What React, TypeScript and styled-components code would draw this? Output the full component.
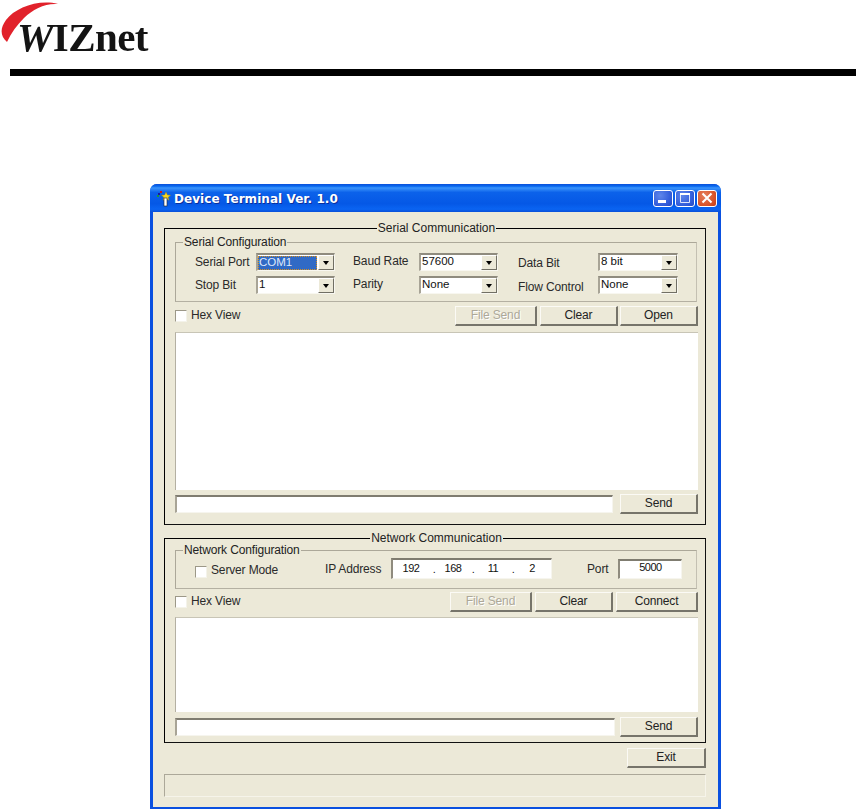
import React from "react";
import styled, { createGlobalStyle } from "styled-components";

const Global = createGlobalStyle`
  html, body { margin: 0; padding: 0; background: #fff; }
  * { box-sizing: border-box; }
  #root { width: 856px; height: 810px; overflow: hidden; font-family: "Liberation Sans", Arial, sans-serif; font-size: 12px; letter-spacing: -0.15px; color: #222; }
`;

const Header = styled.header`
  position: relative;
  height: 69px;
  padding: 15px 0 0 17px;
`;
const LogoText = styled.div`
  position: relative;
  font-family: "Liberation Serif", "Times New Roman", serif;
  font-weight: 700;
  font-size: 41px;
  line-height: 44px;
  letter-spacing: -0.6px;
  color: #141414;
  filter: blur(0.35px);
`;
const LogoW = styled.span`
  font-style: italic;
`;
const Swoosh = styled.svg`
  position: absolute;
  left: 0;
  top: 0;
`;
const Rule = styled.div`
  height: 7px;
  margin-left: 10px;
  background: #000;
`;
const Page = styled.main`
  padding: 108px 0 0 150px;
`;
const Win = styled.div`
  width: 571px;
  background: #0a50e0;
  border-radius: 7px 7px 0 0;
  display: flex;
  flex-direction: column;
  padding: 0 3px 2px;
`;
const TitleBar = styled.div`
  height: 28px;
  margin: 0 -3px;
  padding: 0 4px 0 5px;
  border-radius: 7px 7px 0 0;
  background: linear-gradient(180deg, #0a4fd8 0%, #0a6af0 8%, #3b94fb 14%, #0c62ea 30%, #0558e6 70%, #0a64f2 90%, #0a50d8 100%);
  display: flex;
  align-items: center;
  gap: 2px;
`;
const TitleText = styled.div`
  flex: 1;
  margin: 2px 0 0 -1px;
  color: #fff;
  font-family: "DejaVu Sans", Verdana, sans-serif;
  font-weight: 700;
  font-size: 12px;
  letter-spacing: 0.05px;
  text-shadow: 1px 1px 0 #0a2f9c;
  white-space: nowrap;
`;
const Caption = styled.button<{ $red?: boolean }>`
  width: 20px;
  height: 17px;
  padding: 0;
  border: 1px solid #fff;
  border-radius: 3px;
  background: ${(p) =>
    p.$red
      ? "radial-gradient(circle at 35% 30%, #e5805e, #d9562c 60%, #c63c18)"
      : "radial-gradient(circle at 35% 30%, #5f86ea, #3560dc 60%, #2448c4)"};
  display: flex;
  align-items: center;
  justify-content: center;
`;
const Body = styled.div`
  background: #ece9d8;
  padding: 9px 12px 10px 11px;
`;
const Group = styled.fieldset<{ $gap?: number }>`
  margin: ${(p) => p.$gap ?? 0}px 0 0;
  padding: 0 7px 0 10px;
  min-width: 0;
  border: 1px solid #000;
  border-right-color: #111;
  border-bottom-color: #111;
`;
const GroupLegend = styled.legend`
  margin: 0 auto;
  padding: 0 1px;
  height: 14px;
  line-height: 14px;
  letter-spacing: 0;
  color: #222;
`;
const Inner = styled.fieldset<{ $top?: number }>`
  margin: ${(p) => p.$top ?? 0}px 1px 0 0;
  padding: 0;
  min-width: 0;
  border: 1px solid #aca899;
  border-right-color: #c4c0b2;
  border-bottom-color: #b4b0a2;
`;
const InnerLegend = styled.legend`
  margin-left: 7px;
  padding: 0 1px;
  height: 14px;
  line-height: 14px;
  color: #222;
`;
const ConfigGrid = styled.div`
  display: grid;
  grid-template-columns: 61px 79px 84px 79px 100px 80px;
  grid-auto-rows: 18px;
  row-gap: 5px;
  padding: 4px 0 7px 19px;
  align-items: center;
`;
const Label = styled.span<{ $indent?: number; $dy?: number }>`
  padding-left: ${(p) => p.$indent ?? 0}px;
  margin-top: ${(p) => p.$dy ?? 0}px;
  white-space: nowrap;
  color: #2a2a2a;
`;
const ComboBox = styled.div`
  height: 18px;
  display: flex;
  background: #fff;
  border-style: solid;
  border-width: 2px 1px 1px 2px;
  border-color: #8f8b7e #f8f7f0 #f8f7f0 #a8a496;
`;
const ComboValue = styled.div<{ $selected?: boolean }>`
  flex: 1;
  margin: ${(p) => (p.$selected ? "1px 1px 0 0" : "0")};
  padding-left: 1px;
  font-size: 11.5px;
  letter-spacing: 0;
  line-height: ${(p) => (p.$selected ? "12px" : "13px")};
  white-space: nowrap;
  color: ${(p) => (p.$selected ? "#dfe8fb" : "#111")};
  background: ${(p) => (p.$selected ? "#316ac5" : "#fff")};
  outline: ${(p) => (p.$selected ? "1px dotted #d89020" : "none")};
  outline-offset: -1px;
`;
const ComboArrow = styled.div`
  width: 16px;
  background: #ece9d8;
  border-style: solid;
  border-width: 1px;
  border-color: #fff #716f64 #716f64 #fff;
  display: flex;
  align-items: center;
  justify-content: center;
  &::before {
    content: "";
    border-style: solid;
    border-width: 4px 3.5px 0;
    border-color: #000 transparent transparent;
  }
`;
const Row = styled.div<{ $gap?: number; $top?: number }>`
  display: flex;
  align-items: center;
  height: 20px;
  gap: ${(p) => p.$gap ?? 3}px;
  margin-top: ${(p) => p.$top ?? 4}px;
`;
const Box = styled.span<{ $low?: boolean }>`
  width: 12px;
  height: 12px;
  flex: none;
  margin-top: ${(p) => (p.$low ? 2 : 0)}px;
  background: #fff;
  border-style: solid;
  border-width: 1px;
  border-color: #9c9888 #f4f3ea #f4f3ea #9c9888;
`;
const CheckLabel = styled.label<{ $dy?: number }>`
  display: flex;
  align-items: center;
  gap: 4px;
  margin-top: ${(p) => p.$dy ?? 0}px;
  margin-right: auto;
  white-space: nowrap;
  color: #2a2a2a;
`;
const CheckText = styled.span`
  margin-bottom: 2px;
`;
const WinButton = styled.button<{ $w: number; $ml?: number }>`
  width: ${(p) => p.$w}px;
  height: 20px;
  padding: 0 0 2px;
  margin-left: ${(p) => p.$ml ?? 0}px;
  font: inherit;
  letter-spacing: inherit;
  color: ${(p) => (p.disabled ? "#aca899" : "#222")};
  background: #ece9d8;
  border-style: solid;
  border-width: 1px 2px 2px 1px;
  border-color: #fbfaf5 #76746a #76746a #fbfaf5;
  text-shadow: ${(p) => (p.disabled ? "1px 1px 0 #fff" : "none")};
`;
const TextPane = styled.div<{ $h: number; $top: number }>`
  height: ${(p) => p.$h}px;
  margin-top: ${(p) => p.$top}px;
  background: #fff;
  border-left: 1px solid #b4b0a2;
  border-top: 1px solid #c8c5b6;
`;
const TextInput = styled.div<{ $w: number }>`
  width: ${(p) => p.$w}px;
  height: 18px;
  background: #fff;
  border-style: solid;
  border-width: 2px 1px 1px 2px;
  border-color: #7f7c70 #f6f5ee #f6f5ee #a8a496;
`;
const SendRow = styled.div<{ $top: number; $pad: number }>`
  display: flex;
  align-items: center;
  justify-content: space-between;
  height: 20px;
  margin-top: ${(p) => p.$top}px;
  margin-bottom: ${(p) => p.$pad}px;
`;
const NetRow = styled.div`
  display: flex;
  align-items: center;
  height: 21px;
  margin: 1px 0 9px;
  padding-left: 19px;
`;
const NetLabel = styled.span<{ $w: number; $indent?: number }>`
  width: ${(p) => p.$w}px;
  padding-left: ${(p) => p.$indent ?? 0}px;
  flex: none;
  white-space: nowrap;
  color: #2a2a2a;
`;
const IpField = styled.div`
  width: 161px;
  height: 21px;
  display: grid;
  grid-template-columns: 36px 10px 28px 12px 28px 12px 26px;
  padding-bottom: 5px;
  align-items: center;
  font-size: 11px;
  letter-spacing: -0.5px;
  color: #111;
  background: #fff;
  border-style: solid;
  border-width: 2px 1px 1px 2px;
  border-color: #7f7c70 #f6f5ee #f6f5ee #8f8b7e;
`;
const IpPart = styled.span`
  text-align: center;
`;
const IpDot = styled.span`
  text-align: center;
  padding-top: 3px;
`;
const PortField = styled.div`
  width: 64px;
  height: 20px;
  padding-bottom: 5px;
  display: flex;
  align-items: center;
  justify-content: center;
  font-size: 11px;
  letter-spacing: -0.5px;
  color: #111;
  background: #fff;
  border-style: solid;
  border-width: 2px 1px 1px 2px;
  border-color: #7f7c70 #f6f5ee #f6f5ee #8f8b7e;
`;
const ExitRow = styled.div`
  display: flex;
  justify-content: flex-end;
  margin-top: 5px;
`;
const StatusBar = styled.div`
  height: 23px;
  margin-top: 6px;
  border-style: solid;
  border-width: 1px;
  border-color: #aca899 #f6f4ea #f6f4ea #aca899;
`;

const Combo = ({ value, selected }: { value: string; selected?: boolean }) => (
  <ComboBox>
    <ComboValue $selected={selected}>{value}</ComboValue>
    <ComboArrow />
  </ComboBox>
);

const Check = ({ label, dy, low }: { label: string; dy?: number; low?: boolean }) => (
  <CheckLabel $dy={dy}>
    <Box $low={low} />
    <CheckText>{label}</CheckText>
  </CheckLabel>
);

export default function App() {
  return (
    <>
      <Global />
      <Header>
        <Swoosh width="70" height="50" viewBox="0 0 70 50">
          <path
            d="M7 42 C0 36 0 28 6 20 C15 8 38 -1 58 4 C45 3 33 9 24 18 C17 25 11 33 7 42 Z"
            fill="#e1222b"
          />
        </Swoosh>
        <LogoText>
          <LogoW>W</LogoW>IZnet
        </LogoText>
      </Header>
      <Rule />
      <Page>
        <Win>
          <TitleBar>
            <svg width="18" height="18" viewBox="0 0 18 18">
              <rect x="2" y="6" width="2" height="2" fill="#1a9a3a" />
              <rect x="5" y="2" width="2" height="2" fill="#c8201c" />
              <rect x="3" y="4" width="2" height="2" fill="#1a1aa0" />
              <path d="M11 3l1.4 3 3.2.3-2.4 2 .8 3-3-1.7-3 1.7.8-3-2.4-2 3.2-.3z" fill="#f8d820" stroke="#a08010" strokeWidth=".4" />
              <rect x="9" y="9" width="3" height="8" fill="#fff" stroke="#222" strokeWidth=".6" />
            </svg>
            <TitleText>Device Terminal Ver. 1.0</TitleText>
            <Caption aria-label="Minimize">
              <svg width="12" height="12" viewBox="0 0 12 12">
                <rect x="1" y="8" width="8" height="3" fill="#fff" />
              </svg>
            </Caption>
            <Caption aria-label="Maximize">
              <svg width="12" height="12" viewBox="0 0 12 12">
                <path d="M1.5 1.5h9v9h-9z" fill="none" stroke="#dfe6fb" />
                <rect x="1" y="1" width="10" height="2" fill="#fff" />
              </svg>
            </Caption>
            <Caption $red aria-label="Close">
              <svg width="12" height="12" viewBox="0 0 12 12">
                <path d="M1.5 1.5l9 9M10.5 1.5l-9 9" stroke="#fff" strokeWidth="2" />
              </svg>
            </Caption>
          </TitleBar>
          <Body>
            <Group>
              <GroupLegend>Serial Communication</GroupLegend>
              <Inner>
                <InnerLegend>Serial Configuration</InnerLegend>
                <ConfigGrid>
                  <Label>Serial Port</Label>
                  <Combo value="COM1" selected />
                  <Label $indent={18} $dy={-2}>Baud Rate</Label>
                  <Combo value="57600" />
                  <Label $indent={20} $dy={2}>Data Bit</Label>
                  <Combo value="8 bit" />
                  <Label>Stop Bit</Label>
                  <Combo value="1" />
                  <Label $indent={18} $dy={-2}>Parity</Label>
                  <Combo value="None" />
                  <Label $indent={20} $dy={4}>Flow Control</Label>
                  <Combo value="None" />
                </ConfigGrid>
              </Inner>
              <Row>
                <Check label="Hex View" />
                <WinButton $w={82} disabled>File Send</WinButton>
                <WinButton $w={78}>Clear</WinButton>
                <WinButton $w={78} $ml={-1}>Open</WinButton>
              </Row>
              <TextPane $h={158} $top={6} />
              <SendRow $top={4} $pad={10}>
                <TextInput $w={438} />
                <WinButton $w={78}>Send</WinButton>
              </SendRow>
            </Group>
            <Group $gap={6}>
              <GroupLegend>Network Communication</GroupLegend>
              <Inner $top={-2}>
                <InnerLegend>Network Configuration</InnerLegend>
                <NetRow>
                  <Check label="Server Mode" dy={4} low />
                  <NetLabel $w={66}>IP Address</NetLabel>
                  <IpField>
                    <IpPart>192</IpPart>
                    <IpDot>.</IpDot>
                    <IpPart>168</IpPart>
                    <IpDot>.</IpDot>
                    <IpPart>11</IpPart>
                    <IpDot>.</IpDot>
                    <IpPart>2</IpPart>
                  </IpField>
                  <NetLabel $w={66} $indent={35}>Port</NetLabel>
                  <PortField>5000</PortField>
                  <NetLabel $w={14} />
                </NetRow>
              </Inner>
              <Row $top={3}>
                <Check label="Hex View" />
                <WinButton $w={82} disabled>File Send</WinButton>
                <WinButton $w={78}>Clear</WinButton>
                <WinButton $w={82}>Connect</WinButton>
              </Row>
              <TextPane $h={95} $top={5} />
              <SendRow $top={5} $pad={5}>
                <TextInput $w={440} />
                <WinButton $w={78}>Send</WinButton>
              </SendRow>
            </Group>
            <ExitRow>
              <WinButton $w={79}>Exit</WinButton>
            </ExitRow>
            <StatusBar />
          </Body>
        </Win>
      </Page>
    </>
  );
}
